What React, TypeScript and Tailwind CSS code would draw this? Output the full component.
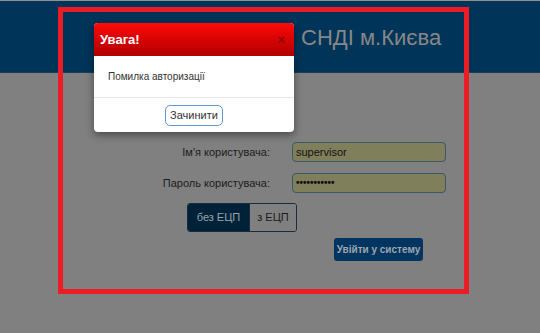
import React from "react";

const font = { fontFamily: '"Liberation Sans", Arial, sans-serif' };

function LoginForm() {
  return (
    <div className="flex flex-col pt-[69px] pl-[160px] text-[11px] text-[#1c1c1c]">
      {/* username */}
      <div className="flex items-center gap-[22px] h-[20px]">
        <label className="w-[110px] text-right">Ім'я користувача:</label>
        <div className="w-[154px] h-[20px] rounded-[4px] border border-[#3a5868] bg-[#7f7f5c] px-[3px] flex items-center text-[#111]">
          supervisor
        </div>
      </div>
      {/* password */}
      <div className="flex items-center gap-[22px] h-[20px] mt-[11px]">
        <label className="w-[110px] text-right">Пароль користувача:</label>
        <div className="w-[154px] h-[20px] rounded-[4px] border border-[#3a5868] bg-[#7f7f5c] px-[3px] flex items-center text-[#111] text-[10px] font-bold leading-none">
          •••••••••••
        </div>
      </div>
      {/* signature toggle */}
      <div className="ml-[27px] mt-[10px] flex h-[29px] w-[110px] rounded-[3px] border border-[#1a2c3c] overflow-hidden">
        <div className="w-[61px] bg-[#002239] text-[#9aa2aa] flex items-center justify-center">без ЕЦП</div>
        <div className="flex-1 bg-[#808080] border-l border-[#1a2c3c] text-[#1a1a1a] flex items-center justify-center">з ЕЦП</div>
      </div>
      {/* submit */}
      <div className="ml-[174px] mt-[6px] w-[89px] h-[23px] rounded-[3px] bg-[#003561] text-[#9ea6ae] text-[10px] font-bold flex items-center justify-center">
        Увійти у систему
      </div>
    </div>
  );
}

function AlertModal() {
  return (
    <div className="absolute left-[94px] top-[23px] w-[200px] h-[109px] bg-white rounded-[4px] shadow-[0_3px_8px_rgba(0,0,0,0.45)] flex flex-col overflow-hidden">
      <div className="h-[33px] bg-gradient-to-b from-[#ff0a0a] to-[#b00000] flex items-center justify-between pl-[6px] pr-[9px]">
        <span className="text-white font-bold text-[13px]">Увага!</span>
        <span className="text-[#8a0808] text-[13px] font-bold leading-none">×</span>
      </div>
      <div className="h-[41px] flex items-center pl-[14px] text-[10px] text-[#333]">Помилка авторизації</div>
      <div className="flex-1 border-t border-[#e5e5e5] flex items-center justify-center">
        <button className="h-[21px] px-[4px] rounded-[5px] border-[1.5px] border-[#5b9bd5] text-[11px] text-[#333] bg-white">
          Зачинити
        </button>
      </div>
    </div>
  );
}

export default function App() {
  return (
    <div className="w-[540px] h-[333px] bg-[#808080] relative overflow-hidden" style={font}>
      <div className="h-[1px] bg-[#8f8f8f]" />
      <header className="h-[72px] bg-[#003459] flex items-center pl-[301px] border-b border-[#1d3d55]">
        <span className="text-[22px] text-[#878787] mt-[2px]">СНДІ м.Києва</span>
      </header>
      <LoginForm />

      {/* annotation frame */}
      <div className="absolute left-[58px] top-[7px] w-[411px] h-[287px] border-[5px] border-[#ec1c24] pointer-events-none" />

      <AlertModal />
    </div>
  );
}
